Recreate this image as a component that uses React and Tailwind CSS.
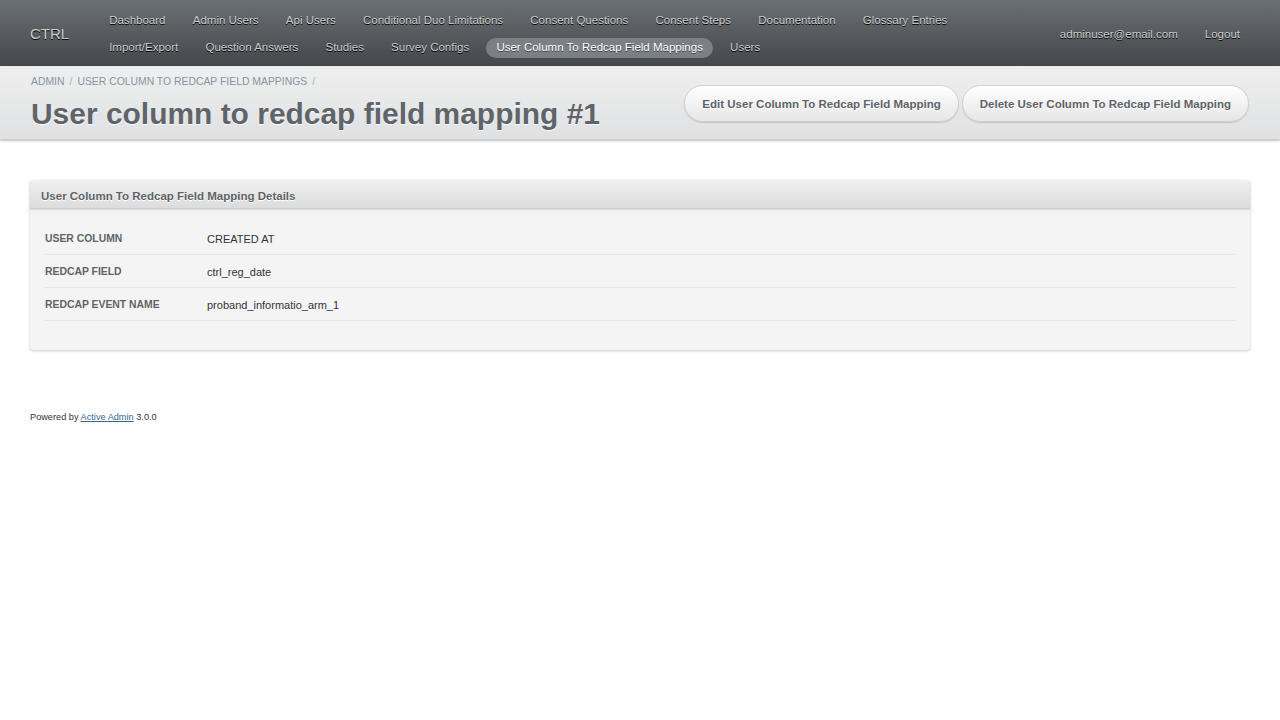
import React from "react";

const font = { fontFamily: '"Liberation Sans", Arial, Helvetica, sans-serif' };

function Tab({ label, active }) {
  return (
    <li className="flex items-center">
      <a
        className={
          "px-[10px] h-[20px] flex items-center rounded-[10px] text-[11.52px] whitespace-nowrap [text-shadow:0_1px_0_#000] " +
          (active ? "bg-[#7b8085] text-[#ffffff] [text-shadow:0_1px_0_#3b3f43]" : "text-[#cdcdcd]")
        }
      >
        {label}
      </a>
    </li>
  );
}

export default function App() {
  const row1 = [
    "Dashboard",
    "Admin Users",
    "Api Users",
    "Conditional Duo Limitations",
    "Consent Questions",
    "Consent Steps",
    "Documentation",
    "Glossary Entries",
  ];
  const row2 = ["Import/Export", "Question Answers", "Studies", "Survey Configs"];

  const rows = [
    ["User Column", "CREATED AT"],
    ["Redcap Field", "ctrl_reg_date"],
    ["Redcap Event Name", "proband_informatio_arm_1"],
  ];

  return (
    <div style={font} className="min-h-[720px] bg-white text-[#323537]">
      {/* Header */}
      <div className="h-[66px] flex items-center bg-gradient-to-b from-[#6b7075] to-[#44484c] pl-[30px] pr-[30px] shadow-[0_1px_2px_rgba(0,0,0,0.2)]">
        <h1 className="text-[15px] text-[#cdcdcd] [text-shadow:0_1px_0_#000] mr-[30px] pt-[2px]">CTRL</h1>
        <div className="flex flex-col pt-[2px]">
          <ul className="flex h-[27px] gap-[7.2px]">
            {row1.map((t) => (
              <Tab key={t} label={t} />
            ))}
          </ul>
          <ul className="flex h-[27px] gap-[7.2px]">
            {row2.map((t) => (
              <Tab key={t} label={t} />
            ))}
            <Tab label="User Column To Redcap Field Mappings" active />
            <Tab label="Users" />
          </ul>
        </div>
        <ul className="ml-auto flex gap-[7px] pt-[3px]">
          <Tab label="adminuser@email.com" />
          <Tab label="Logout" />
        </ul>
      </div>

      {/* Title bar */}
      <div className="flex items-start justify-between pl-[31px] pr-[31px] bg-gradient-to-b from-[#efefef] to-[#dfe1e2] border-b border-[#cdcdcd] shadow-[0_1px_2px_rgba(0,0,0,0.25)] h-[74px]">
        <div className="pt-[9px]">
          <div className="h-[14px] flex items-center text-[10.4px] uppercase text-[#8a949e] gap-[5px]">
            <span>Admin</span>
            <span className="text-[#aab2b9]">/</span>
            <span>User Column To Redcap Field Mappings</span>
            <span className="text-[#aab2b9]">/</span>
          </div>
          <h2 className="text-[29.95px] leading-[38px] font-bold text-[#5e6469] [text-shadow:0_1px_0_#ffffff] mt-[6px]">
            User column to redcap field mapping #1
          </h2>
        </div>
        <div className="flex gap-[3px] pt-[19px]">
          {["Edit User Column To Redcap Field Mapping", "Delete User Column To Redcap Field Mapping"].map((b) => (
            <a
              key={b}
              className="h-[37px] px-[17px] flex items-center pt-[3px] rounded-full border border-[#d0d0d0] bg-gradient-to-b from-[#ffffff] to-[#e6e6e6] shadow-[0_1px_1px_rgba(0,0,0,0.15)] text-[11.52px] font-bold text-[#5e6469] whitespace-nowrap [text-shadow:0_1px_0_#ffffff]"
            >
              {b}
            </a>
          ))}
        </div>
      </div>

      {/* Content */}
      <div className="px-[30px] pt-[40px]">
        <div className="bg-[#f4f4f4] shadow-[0_1px_3px_rgba(0,0,0,0.22)] rounded-[3px]">
          <h3 className="h-[29px] flex items-center pt-[5px] px-[11px] text-[11.52px] font-bold text-[#5e6469] bg-gradient-to-b from-[#f0f0f0] to-[#dcdcdc] border-b border-[#cdcdcd] shadow-[0_1px_2px_rgba(0,0,0,0.12)] [text-shadow:0_1px_0_#ffffff] rounded-t-[3px]">
            User Column To Redcap Field Mapping Details
          </h3>
          <div className="px-[15px] pt-[13px] pb-[29px]">
            <table className="w-full border-collapse">
              <tbody>
                {rows.map(([k, v]) => (
                  <tr key={k} className="border-b border-[#e6e6e6]">
                    <th className="w-[162px] text-left align-top pt-[10px] pb-[9px] leading-[13px] text-[10.4px] font-bold uppercase text-[#5e6469]">
                      {k}
                    </th>
                    <td className="align-top pt-[11px] pb-[8px] text-[11px] leading-[13px] text-[#323537]">{v}</td>
                  </tr>
                ))}
              </tbody>
            </table>
          </div>
        </div>

        <div className="pt-[61px] text-[9.2px] text-[#323537]">
          Powered by <a className="underline text-[#38678b]">Active Admin</a> 3.0.0
        </div>
      </div>
    </div>
  );
}
